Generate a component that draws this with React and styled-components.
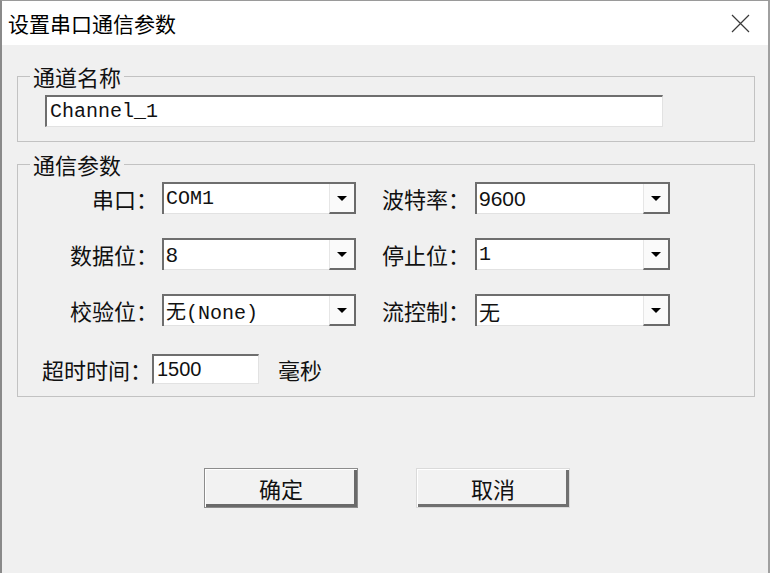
import React from 'react';
import styled, { createGlobalStyle } from 'styled-components';

const GlobalStyle = createGlobalStyle`
	html, body {
		margin: 0;
		padding: 0;
		background: #f0f0f0;
		overflow: hidden;
	}
	* {
		box-sizing: border-box;
	}
`;

const CJK = `"Noto Sans CJK SC", "Liberation Sans", sans-serif`;
const MONO = `"Liberation Mono", "Noto Sans CJK SC", monospace`;
const SANS = `"Liberation Sans", "Noto Sans CJK SC", sans-serif`;

const Window = styled.div`
	width: 770px;
	height: 573px;
	display: flex;
	flex-direction: column;
	background: #f0f0f0;
	border-top: 1px solid #9a9a9a;
	border-left: 2px solid #8a8a8a;
	border-right: 2px solid #a0a0a0;
	font-family: ${CJK};
	color: #111;
`;

const TitleBar = styled.div`
	height: 44px;
	flex: none;
	background: #fff;
	display: flex;
	align-items: center;
	justify-content: space-between;
	padding: 0 18px 0 6px;
`;

const Title = styled.span`
	font-size: 21px;
	color: #000;
`;

const Close = styled.svg`
	width: 19px;
	height: 19px;
	display: block;
`;

const Body = styled.div`
	flex: 1;
	padding: 0 13px 0 15px;
	display: flex;
	flex-direction: column;
`;

const Group = styled.fieldset`
	margin: ${(p) => p.$top}px 0 0;
	padding: 0;
	min-width: 0;
	border: 1px solid #c2c2c2;
`;

const Legend = styled.legend`
	margin-left: 12px;
	padding: 0 3px;
	font-size: 22px;
	line-height: 24px;
	color: #111;
`;

const NameBox = styled.div`
	padding: 7px 0 14px 27px;
`;

const TextField = styled.input`
	display: block;
	width: ${(p) => p.$w}px;
	height: ${(p) => p.$h}px;
	margin: 0;
	padding: 0 0 0 3px;
	background: #fff;
	border-top: 2px solid #6e6e6e;
	border-left: 2px solid #6e6e6e;
	border-right: 1px solid #e2e2e2;
	border-bottom: 1px solid #e2e2e2;
	outline: none;
	font-family: ${(p) => (p.$mono ? MONO : SANS)};
	font-size: 20px;
	color: #111;
`;

const ParamGrid = styled.div`
	display: grid;
	grid-template-columns: 144px 194px 119px 195px;
	grid-template-rows: 32px 32px 32px 30px;
	row-gap: 24px;
	align-items: center;
	padding: 6px 0 16px 0;
`;

const Label = styled.span`
	justify-self: end;
	padding-right: ${(p) => p.$pad || 4}px;
	font-size: 22px;
	line-height: 24px;
	white-space: nowrap;
`;

const Combo = styled.div`
	height: 32px;
	display: flex;
	border-top: 2px solid #6e6e6e;
	border-left: 2px solid #6e6e6e;
	background: #fff;
`;

const ComboText = styled.div`
	flex: 1;
	display: flex;
	align-items: center;
	padding-left: 2px;
	border-bottom: 1px solid #e2e2e2;
	font-family: ${(p) => (p.$mono ? MONO : SANS)};
	font-size: ${(p) => (p.$mono ? 20 : 21)}px;
	color: #111;
	white-space: pre;
`;

const ComboButton = styled.div`
	width: 27px;
	display: flex;
	align-items: center;
	justify-content: center;
	background: #fafafa;
	border-left: 1px solid #e6e6e6;
	border-right: 2px solid #6a6a6a;
	border-bottom: 2px solid #6a6a6a;
`;

const Arrow = styled.span`
	width: 0;
	height: 0;
	border-left: 5px solid transparent;
	border-right: 5px solid transparent;
	border-top: 5px solid #000;
`;

const TimeoutRow = styled.div`
	grid-column: 1 / -1;
	display: flex;
	align-items: center;
	height: 30px;
	margin-top: 8px;
`;

const TimeoutLabel = styled.span`
	width: 134px;
	text-align: right;
	font-size: 22px;
	line-height: 24px;
	white-space: nowrap;
`;

const Unit = styled.span`
	margin-left: 19px;
	font-size: 22px;
	line-height: 24px;
`;

const ButtonRow = styled.div`
	display: flex;
	justify-content: center;
	gap: 58px;
	margin-top: 71px;
	padding-left: 2px;
`;

const Button = styled.button`
	width: 154px;
	height: 40px;
	margin: 0;
	padding: 0;
	background: #f2f2f2;
	font-family: ${CJK};
	font-size: 22px;
	color: #111;
	border: 1px solid ${(p) => (p.$primary ? '#8c8c8c' : '#dadada')};
	box-shadow: ${(p) =>
		p.$primary
			? 'inset 1px 1px 0 #fff, inset -3px -3px 0 #6a6a6a'
			: 'inset 1px 1px 0 #fff, inset -3px -3px 0 #707070'};
`;

const Select = ({ value, mono }) => (
	<Combo>
		<ComboText $mono={mono}>{value}</ComboText>
		<ComboButton>
			<Arrow />
		</ComboButton>
	</Combo>
);

export default function App() {
	return (
		<>
			<GlobalStyle />
			<Window>
				<TitleBar>
					<Title>设置串口通信参数</Title>
					<Close viewBox="0 0 19 19">
						<path d="M1 1 L18 18 M18 1 L1 18" stroke="#3a3a3a" strokeWidth="1.2" fill="none" />
					</Close>
				</TitleBar>
				<Body>
					<Group $top={19}>
						<Legend>通道名称</Legend>
						<NameBox>
							<TextField $w={618} $h={32} $mono readOnly defaultValue="Channel_1" />
						</NameBox>
					</Group>
					<Group $top={10}>
						<Legend>通信参数</Legend>
						<ParamGrid>
							<Label>串口：</Label>
							<Select value="COM1" mono />
							<Label $pad={5}>波特率：</Label>
							<Select value="9600" />

							<Label>数据位：</Label>
							<Select value="8" />
							<Label $pad={5}>停止位：</Label>
							<Select value="1" mono />

							<Label>校验位：</Label>
							<Select value="无(None)" mono />
							<Label $pad={5}>流控制：</Label>
							<Select value="无" />

							<TimeoutRow>
								<TimeoutLabel>超时时间：</TimeoutLabel>
								<TextField $w={107} $h={30} readOnly defaultValue="1500" />
								<Unit>毫秒</Unit>
							</TimeoutRow>
						</ParamGrid>
					</Group>
					<ButtonRow>
						<Button $primary>确定</Button>
						<Button>取消</Button>
					</ButtonRow>
				</Body>
			</Window>
		</>
	);
}
